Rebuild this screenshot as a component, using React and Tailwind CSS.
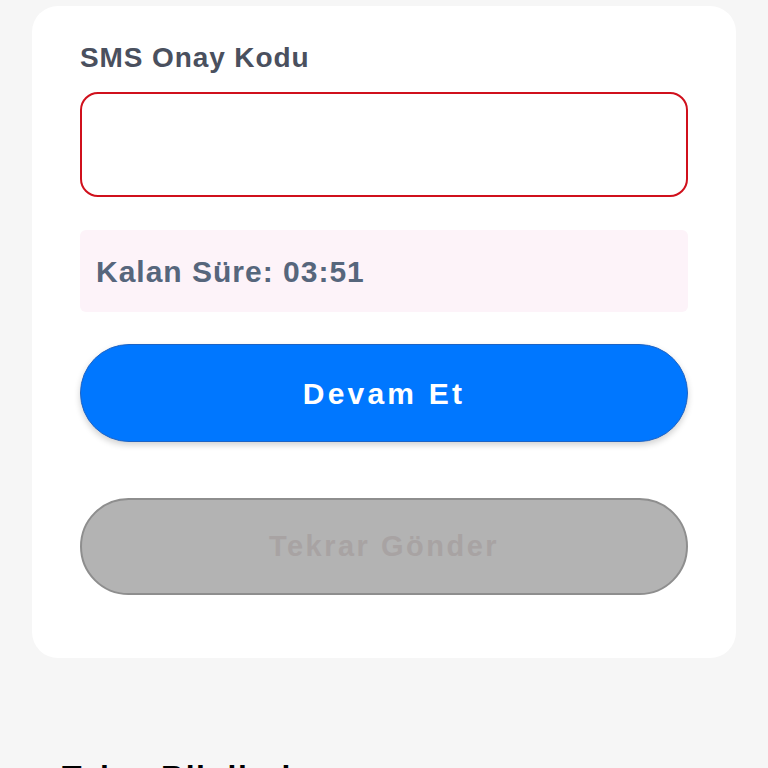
import React, { useState } from "react";

const fontStack = { fontFamily: "'Liberation Sans', Arial, sans-serif" };

export default function App() {
  const [code, setCode] = useState("");

  return (
    <div className="h-[768px] w-full overflow-hidden bg-[#f6f6f6]" style={fontStack}>
      <div className="mx-8 mt-[6px] rounded-[26px] bg-white px-12 pb-[63px] pt-[36px]">
        <label className="block text-[28px] font-bold leading-[32px] tracking-[0.9px] text-[#4a505e]">
          SMS Onay Kodu
        </label>
        <input
          type="text"
          value={code}
          onChange={(e) => setCode(e.target.value)}
          className="mt-[18px] block h-[105px] w-full rounded-[18px] border-2 border-[#d0101c] bg-white px-4 text-[26px] outline-none"
        />

        <div className="mt-[33px] flex h-[82px] items-center rounded-[6px] bg-[#fdf3f9] px-4">
          <span className="text-[30px] font-bold tracking-[1px] text-[#56667c]">Kalan Süre: 03:51</span>
        </div>

        <button
          type="button"
          className="mt-[32px] flex h-[98px] w-full items-center justify-center rounded-full border border-[#1d63c4] bg-[#0077ff] text-[30px] font-bold tracking-[3.2px] text-white shadow-[0_3px_6px_rgba(0,0,0,0.18)]"
        >
          Devam Et
        </button>

        <button
          type="button"
          disabled
          className="mt-[56px] flex h-[97px] w-full items-center justify-center rounded-full border-2 border-[#8e8e8e] bg-[#b3b3b3] text-[29px] font-bold tracking-[2.5px] text-[#a8a3a3]"
        >
          Tekrar Gönder
        </button>
      </div>

      <h2 className="ml-[62px] mt-[95px] text-[32px] font-bold tracking-[1.5px] text-black">Talep Bilgileri</h2>
    </div>
  );
}
